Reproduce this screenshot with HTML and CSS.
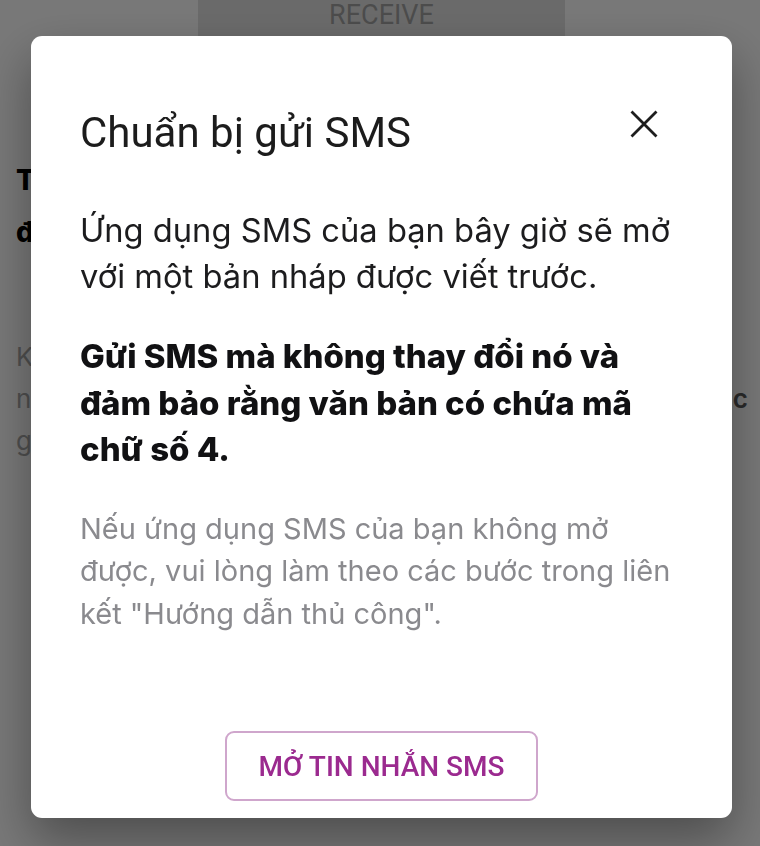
FILE: index.html
```html
<!DOCTYPE html>
<html lang="vi">
<head>
<meta charset="utf-8">
<title>Chuẩn bị gửi SMS</title>
<link rel="stylesheet" href="styles.css">
</head>
<body>
<div class="page">
  <nav class="tabs">
    <div class="tab tab-active">RECEIVE</div>
  </nav>
  <section class="content">
    <h2 class="heading"><span class="hline">Tải</span><span class="hline">đã</span></h2>
    <p class="desc">
      <span class="dline">Khi</span>
      <span class="dline dline-end"><span>nếu</span><span class="tail">c</span></span>
      <span class="dline">gửi</span>
    </p>
  </section>
</div>

<div class="overlay">
  <div class="modal" role="dialog" aria-labelledby="modal-title">
    <header class="modal-header">
      <h1 class="modal-title" id="modal-title">Chuẩn bị gửi SMS</h1>
      <button class="close-btn" aria-label="Đóng">
        <svg width="28" height="28" viewBox="0 0 28 28" aria-hidden="true">
          <path d="M1.5 1.5 L26.5 26.5 M26.5 1.5 L1.5 26.5" stroke="#1e1e1e" stroke-width="2.8" stroke-linecap="butt" fill="none"/>
        </svg>
      </button>
    </header>
    <div class="modal-body">
      <p class="text-main">Ứng dụng SMS của bạn bây giờ sẽ mở với một bản nháp được viết trước.</p>
      <p class="text-strong">Gửi SMS mà không thay đổi nó và đảm bảo rằng văn bản có chứa mã chữ số 4.</p>
      <p class="text-muted">Nếu ứng dụng SMS của bạn không mở được, vui lòng làm theo các bước trong liên kết "Hướng dẫn thủ công".</p>
    </div>
    <footer class="modal-footer">
      <button class="sms-btn">MỞ TIN NHẮN SMS</button>
    </footer>
  </div>
</div>
</body>
</html>
```

FILE: styles.css
```css
* { box-sizing: border-box; }

html, body {
  margin: 0;
  padding: 0;
  width: 760px;
  height: 846px;
  overflow: hidden;
  background: #ffffff;
  font-family: "Inter", "Noto Sans", sans-serif;
}

/* underlying page */
.page {
  width: 760px;
  height: 846px;
}

.tabs {
  display: flex;
  justify-content: center;
  height: 36px;
}

.tab {
  width: 367px;
  margin-left: 3px;
  display: flex;
  align-items: center;
  justify-content: center;
  padding-bottom: 6px;
  font-family: "Roboto", sans-serif;
  font-size: 27px;
  font-weight: 400;
  line-height: 30px;
  color: #a2a2a2;
}

.tab-active {
  background: #e2e2e2;
}

.content {
  padding: 118px 12px 0 16px;
}

.heading {
  margin: 0;
  font-family: "Inter", sans-serif;
  font-size: 28px;
  font-weight: 800;
  line-height: 52px;
  color: #000;
}

.hline, .dline {
  display: block;
  white-space: nowrap;
}

.desc {
  margin: 78px 0 0;
  font-family: "Inter", sans-serif;
  font-size: 26px;
  line-height: 42px;
  color: #a8a8a8;
}

.dline-end {
  display: flex;
  justify-content: space-between;
}

.tail {
  color: #5a5a5a;
  font-weight: 600;
}

/* overlay + modal */
.overlay {
  position: fixed;
  inset: 0;
  background: rgba(0, 0, 0, 0.53);
  padding: 36px 28px 0 31px;
}

.modal {
  width: 701px;
  height: 782px;
  background: #fff;
  border-radius: 11px;
  box-shadow: 0 22px 50px rgba(0, 0, 0, 0.36);
  padding: 73px 49px 17px;
  display: flex;
  flex-direction: column;
}

.modal-header {
  display: flex;
  justify-content: space-between;
  align-items: flex-start;
  height: 48px;
}

.modal-title {
  margin: 0;
  font-family: "Roboto", sans-serif;
  font-size: 42px;
  font-weight: 400;
  line-height: 48px;
  color: #1c1c1c;
}

.close-btn {
  border: 0;
  background: none;
  padding: 0;
  margin: 1px 25px 0 0;
  width: 28px;
  height: 28px;
  cursor: pointer;
}

.close-btn svg { display: block; }

.modal-body {
  padding-top: 50px;
}

.modal-body p {
  margin: 0;
}

.text-main {
  font-size: 32.7px;
  line-height: 46px;
  color: #1c1c1e;
}

.text-strong {
  margin-top: 34px !important;
  font-size: 33px;
  line-height: 46.5px;
  font-weight: 800;
  color: #111113;
}

.text-muted {
  margin-top: 35px !important;
  font-size: 29px;
  line-height: 42.5px;
  color: #8a8a8e;
}

.modal-footer {
  margin-top: auto;
  display: flex;
  justify-content: center;
}

.sms-btn {
  width: 313px;
  height: 70px;
  border: 2px solid #cfa6cc;
  border-radius: 9px;
  background: #fff;
  font-family: "Roboto", sans-serif;
  font-size: 28px;
  font-weight: 500;
  color: #9b2a8f;
  cursor: pointer;
}
```
